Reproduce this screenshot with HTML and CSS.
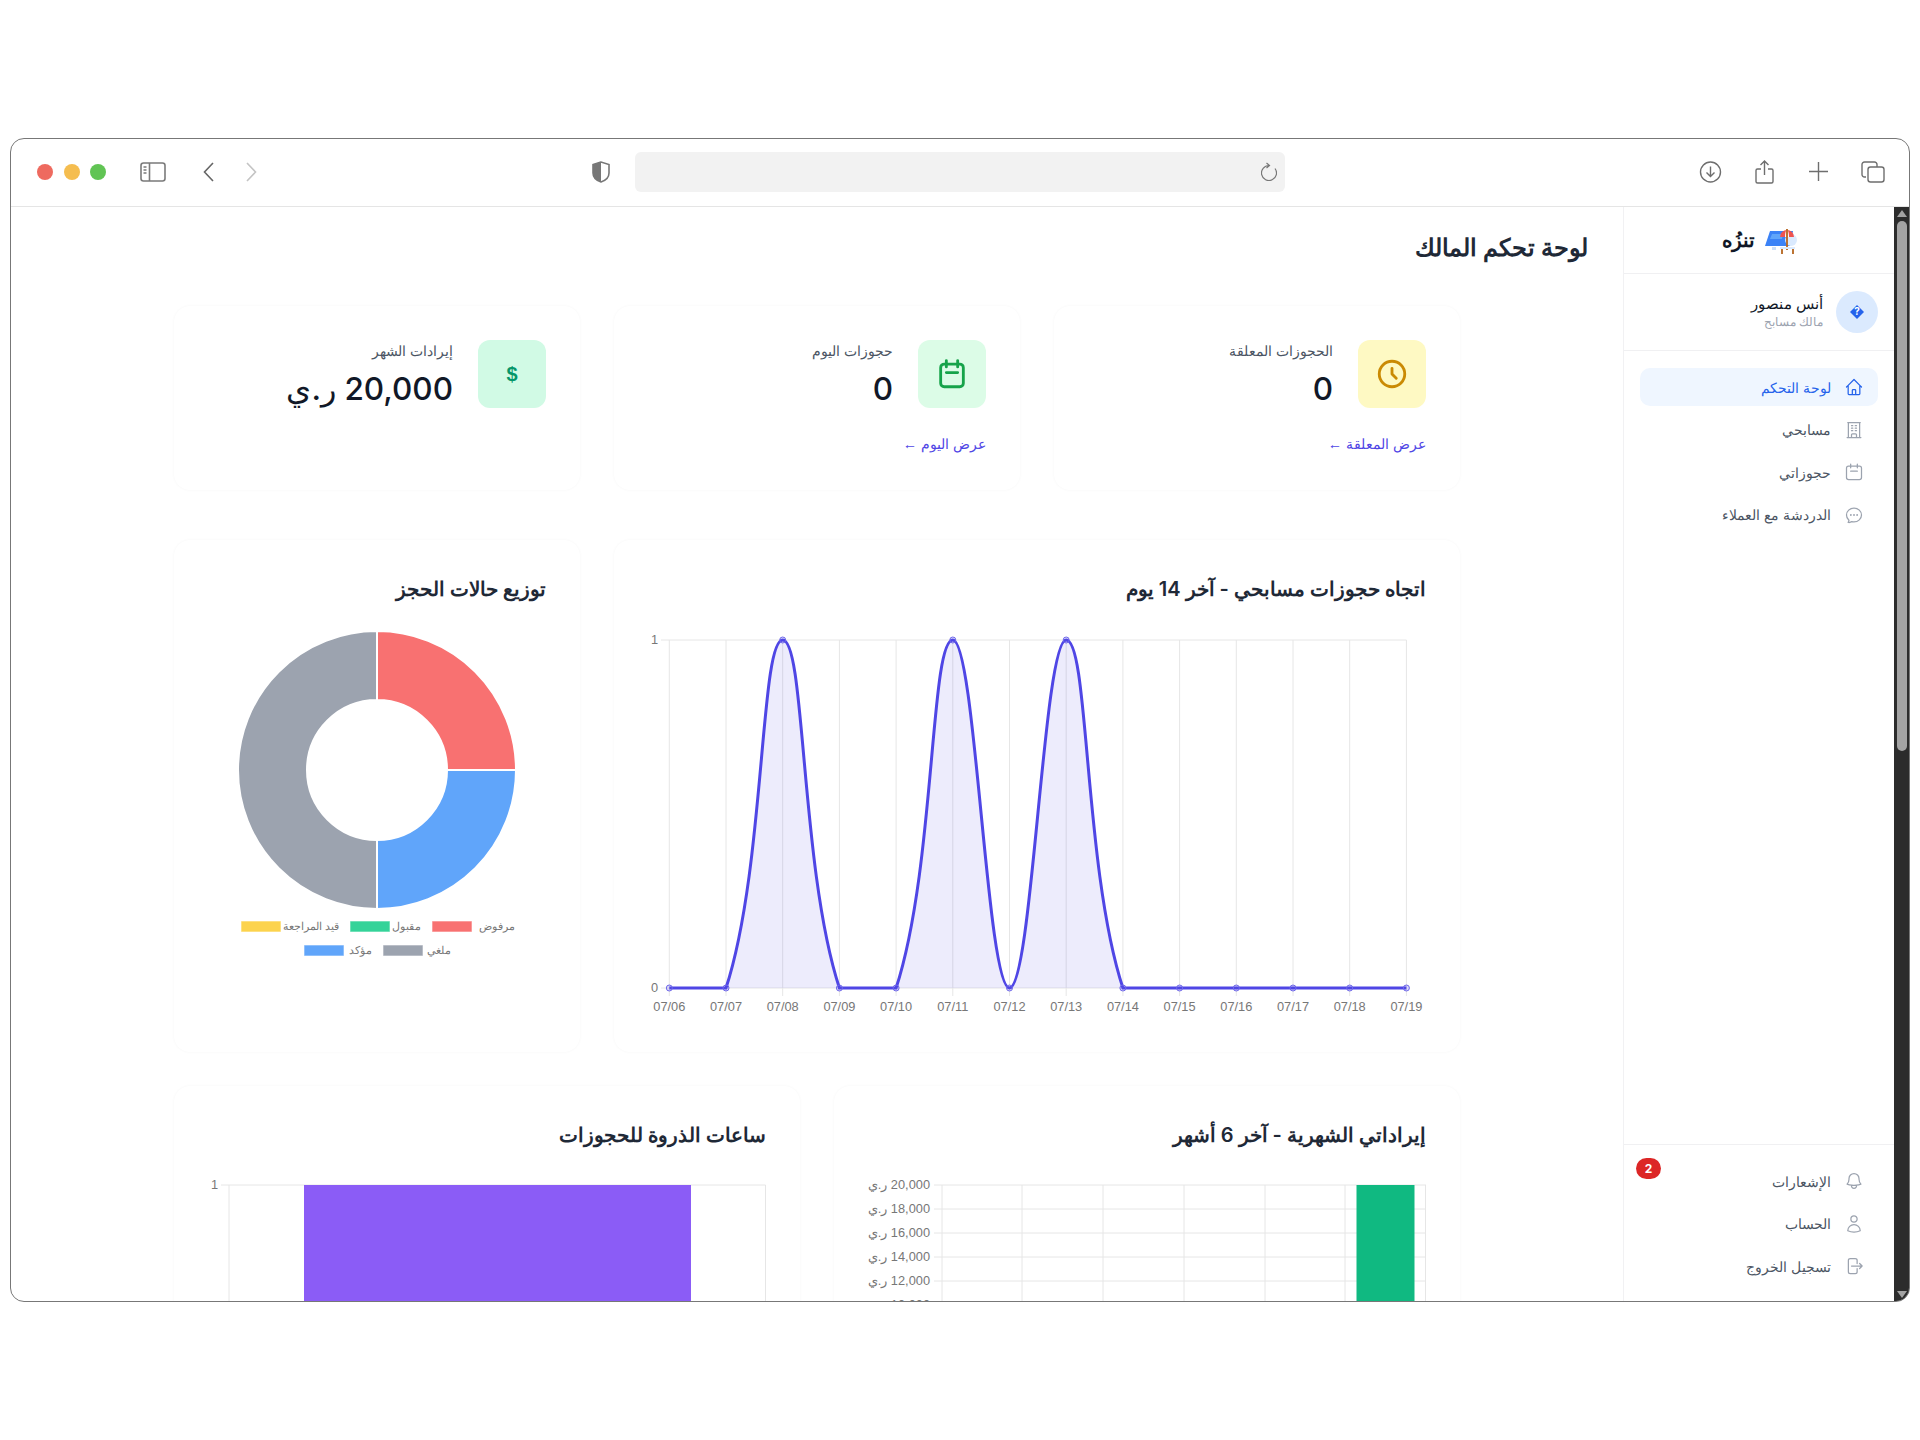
FILE: index.html
```html
<!DOCTYPE html>
<html lang="ar">
<head>
  <meta charset="UTF-8">
  <meta name="viewport" content="width=device-width, initial-scale=1.0">
  <title>لوحة تحكم المالك</title>
  <link rel="stylesheet" href="styles.css">
</head>
<body>
  <div class="window">
    <!-- Browser toolbar -->
    <div class="toolbar">
      <span class="dot dot-red"></span>
      <span class="dot dot-yellow"></span>
      <span class="dot dot-green"></span>
      <svg class="tb-sidebar" viewBox="0 0 26 20" fill="none" stroke="#7a7a7a" stroke-width="1.6"><rect x="1" y="1" width="24" height="18" rx="2.5"/><path d="M9.5 1v18M3.5 5h3M3.5 8h3M3.5 11h3"/></svg>
      <svg class="tb-back" viewBox="0 0 11 20" fill="none" stroke="#666" stroke-width="1.6"><path d="M10 1 1.5 10l8.5 9"/></svg>
      <svg class="tb-forward" viewBox="0 0 11 20" fill="none" stroke="#c4c4c4" stroke-width="1.6"><path d="m1 1 8.5 9L1 19"/></svg>
      <svg class="tb-shield" viewBox="0 0 20 22"><path d="M10 1 2 3.5V12c0 4 3.5 7.5 8 9 4.5-1.5 8-5 8-9V3.5z" fill="none" stroke="#777" stroke-width="1.6"/><path d="M10 1 2 3.5V12c0 4 3.5 7.5 8 9z" fill="#777"/></svg>
      <div class="urlbar">
        <svg class="tb-reload" viewBox="0 0 16 19" fill="none" stroke="#777" stroke-width="1.2"><path d="M8 3.5A7.5 7.5 0 1 0 14 6.5M5.500 1l3 2.500-3 2.500"/></svg>
      </div>
      <svg class="tb-download" viewBox="0 0 23 22" fill="none" stroke="#6e6e6e" stroke-width="1.4"><circle cx="11.5" cy="11" r="10"/><path d="M11.5 5.5v10M7.5 11.5l4 4 4-4"/></svg>
      <svg class="tb-share" viewBox="0 0 19 24" fill="none" stroke="#6e6e6e" stroke-width="1.4"><path d="M6 9H2.500A1.500 1.500 0 0 0 1 10.500v11A1.500 1.500 0 0 0 2.500 23h14a1.500 1.500 0 0 0 1.500-1.500v-11A1.500 1.500 0 0 0 16.500 9H13M9.500 15V1M5.500 5l4-4 4 4"/></svg>
      <svg class="tb-plus" viewBox="0 0 19 19" fill="none" stroke="#6e6e6e" stroke-width="1.4"><path d="M9.5 0v19M0 9.5h19"/></svg>
      <svg class="tb-tabs" viewBox="0 0 24 22" fill="none" stroke="#6e6e6e" stroke-width="1.4"><path d="M5 16H3.500A2.500 2.500 0 0 1 1 13.500v-10A2.500 2.500 0 0 1 3.500 1h10A2.500 2.500 0 0 1 16 3.500V6"/><rect x="7" y="6" width="16" height="15" rx="2.5"/></svg>
    </div>

    <div class="app">
      <!-- Scrollbar -->
      <div class="scrollbar">
        <span class="sb-up"></span>
        <span class="sb-thumb"></span>
        <span class="sb-down"></span>
      </div>

      <!-- Sidebar -->
      <aside class="sidebar">
        <div class="brand">
          <svg class="brand-logo" viewBox="0 0 33 27">
            <path d="M6 4h23l-3 15H1z" fill="#3b82f6"/>
            <path d="M8 7h11l-1 5H6z" fill="#60a5fa"/>
            <circle cx="27" cy="13" r="6" fill="#dbeafe"/>
            <path d="M9 20v3M11 20v3" stroke="#bcd4f6" stroke-width="1.5"/>
            <path d="M16 10a7 7 0 0 1 14 0z" fill="#ef5350"/>
            <path d="M21 10a2 7 0 0 1 4 0z" fill="#fff"/>
            <path d="M23 2v21M18 27v-6M29 27v-6" stroke="#b5651d" stroke-width="1.8"/>
            <path d="M16 21h15" stroke="#dbeafe" stroke-width="2"/>
          </svg>
          <span class="brand-name">تنزُه</span>
        </div>

        <div class="profile">
          <div class="avatar">
            <svg viewBox="0 0 14 14" width="14" height="14"><path d="M7 0 14 7 7 14 0 7z" fill="#2563eb"/><text x="7" y="10" class="avatar-q">?</text></svg>
          </div>
          <div class="profile-text">
            <div class="profile-name">أنس منصور</div>
            <div class="profile-role">مالك مسابح</div>
          </div>
        </div>

        <nav class="nav">
          <a class="nav-item active">
            <svg class="nav-icon" viewBox="0 0 24 24"><path d="M3 12l2-2m0 0l7-7 7 7M5 10v10a1 1 0 001 1h3m10-11l2 2m-2-2v10a1 1 0 01-1 1h-3m-6 0a1 1 0 001-1v-4a1 1 0 011-1h2a1 1 0 011 1v4a1 1 0 001 1m-6 0h6"/></svg>
            لوحة التحكم
          </a>
          <a class="nav-item">
            <svg class="nav-icon" viewBox="0 0 24 24"><path d="M3.75 21h16.5M4.5 3h15M5.25 3v18m13.5-18v18M9 6.75h1.5m-1.5 3h1.5m-1.5 3h1.5m3-6H15m-1.5 3H15m-1.5 3H15M9 21v-3.375c0-.621.504-1.125 1.125-1.125h3.75c.621 0 1.125.504 1.125 1.125V21"/></svg>
            مسابحي
          </a>
          <a class="nav-item">
            <svg class="nav-icon" viewBox="0 0 24 24"><rect x="3" y="5" width="18" height="16" rx="2.5"/><path d="M8 2.5V7M16 2.5V7M8 11h8"/></svg>
            حجوزاتي
          </a>
          <a class="nav-item">
            <svg class="nav-icon" viewBox="0 0 24 24"><path d="M8.625 12a.375.375 0 11-.75 0 .375.375 0 01.75 0zm0 0H8.25m4.125 0a.375.375 0 11-.75 0 .375.375 0 01.75 0zm0 0H12m4.125 0a.375.375 0 11-.75 0 .375.375 0 01.75 0zm0 0h-.375M21 12c0 4.556-4.03 8.25-9 8.25a9.764 9.764 0 01-2.555-.337A5.972 5.972 0 015.41 20.97a5.969 5.969 0 01-.474-.065 4.48 4.48 0 00.978-2.025c.09-.457-.133-.901-.467-1.226C3.93 16.178 3 14.189 3 12c0-4.556 4.03-8.25 9-8.25s9 3.694 9 8.25z"/></svg>
            الدردشة مع العملاء
          </a>
        </nav>

        <div class="nav nav-bottom">
          <a class="nav-item">
            <svg class="nav-icon" viewBox="0 0 24 24"><path d="M14.857 17.082a23.848 23.848 0 005.454-1.31A8.967 8.967 0 0118 9.75V9A6 6 0 006 9v.75a8.967 8.967 0 01-2.312 6.022c1.733.64 3.56 1.085 5.455 1.31m5.714 0a24.255 24.255 0 01-5.714 0m5.714 0a3 3 0 11-5.714 0"/></svg>
            الإشعارات
            <span class="badge">2</span>
          </a>
          <a class="nav-item">
            <svg class="nav-icon" viewBox="0 0 24 24"><path d="M15.75 6a3.75 3.75 0 11-7.5 0 3.75 3.75 0 017.5 0zM4.501 20.118a7.5 7.5 0 0114.998 0A17.933 17.933 0 0112 21.75c-2.676 0-5.216-.584-7.499-1.632z"/></svg>
            الحساب
          </a>
          <a class="nav-item">
            <svg class="nav-icon" viewBox="0 0 24 24"><path d="M15.75 9V5.25A2.25 2.25 0 0013.5 3h-6a2.25 2.25 0 00-2.25 2.25v13.5A2.25 2.25 0 007.5 21h6a2.25 2.25 0 002.25-2.25V15m3 0l3-3m0 0l-3-3m3 3H9"/></svg>
            تسجيل الخروج
          </a>
        </div>
      </aside>

      <!-- Main content -->
      <main class="main">
        <h1 class="page-title">لوحة تحكم المالك</h1>

        <div class="content">
          <div class="stats">
            <div class="card stat-card">
              <div class="stat">
                <div class="tile tile-yellow">
                  <svg viewBox="0 0 24 24" width="34" height="34" fill="none" stroke="#ca8a04" stroke-width="2" stroke-linecap="round" stroke-linejoin="round"><path d="M12 8v4l3 3m6-3a9 9 0 11-18 0 9 9 0 0118 0z"/></svg>
                </div>
                <div>
                  <div class="stat-label">الحجوزات المعلقة</div>
                  <div class="stat-value">0</div>
                </div>
              </div>
              <a class="stat-link">عرض المعلقة <span class="arrow">←</span></a>
            </div>

            <div class="card stat-card">
              <div class="stat">
                <div class="tile tile-green">
                  <svg viewBox="0 0 24 24" width="34" height="34" fill="none" stroke="#16a34a" stroke-width="2" stroke-linecap="round" stroke-linejoin="round"><rect x="4" y="5" width="16" height="16" rx="2.5"/><path d="M8 2.5V7M16 2.5V7M8 11h8"/></svg>
                </div>
                <div>
                  <div class="stat-label">حجوزات اليوم</div>
                  <div class="stat-value">0</div>
                </div>
              </div>
              <a class="stat-link">عرض اليوم <span class="arrow">←</span></a>
            </div>

            <div class="card stat-card">
              <div class="stat">
                <div class="tile tile-mint"><span class="dollar">$</span></div>
                <div>
                  <div class="stat-label">إيرادات الشهر</div>
                  <div class="stat-value">20,000 ر.ي</div>
                </div>
              </div>
            </div>
          </div>

          <div class="charts-wide">
            <div class="card chart-card">
              <h2 class="chart-title">اتجاه حجوزات مسابحي - آخر 14 يوم</h2>
              <svg class="chart" width="777" height="414" viewBox="649 604 777 414">
                <g class="grid">
                  <path d="M661 640H1406.4M661 988H1406.4"/>
                  <path d="M669.3 640V996M726 640V996M782.7 640V996M839.4 640V996M896.1 640V996M952.8 640V996M1009.5 640V996M1066.2 640V996M1122.9 640V996M1179.6 640V996M1236.3 640V996M1293 640V996M1349.7 640V996M1406.4 640V996"/>
                </g>
                <path class="area" d="M669.3 988L726 988C765.1 868.1 760 640 782.7 640C805.4 640 800.3 868.1 839.4 988L896.1 988C935.2 868.1 930.1 640 952.8 640C975.5 640 986.8 988 1009.5 988C1032.2 988 1043.5 640 1066.2 640C1088.9 640 1083.8 868.1 1122.9 988L1406.4 988Z"/>
                <path class="line" d="M669.3 988L726 988C765.1 868.1 760 640 782.7 640C805.4 640 800.3 868.1 839.4 988L896.1 988C935.2 868.1 930.1 640 952.8 640C975.5 640 986.8 988 1009.5 988C1032.2 988 1043.5 640 1066.2 640C1088.9 640 1083.8 868.1 1122.9 988L1406.4 988"/>
                <g class="points">
                  <circle cx="669.3" cy="988" r="3"/><circle cx="726" cy="988" r="3"/><circle cx="782.7" cy="640" r="3"/><circle cx="839.4" cy="988" r="3"/><circle cx="896.1" cy="988" r="3"/><circle cx="952.8" cy="640" r="3"/><circle cx="1009.5" cy="988" r="3"/><circle cx="1066.2" cy="640" r="3"/><circle cx="1122.9" cy="988" r="3"/><circle cx="1179.6" cy="988" r="3"/><circle cx="1236.3" cy="988" r="3"/><circle cx="1293" cy="988" r="3"/><circle cx="1349.7" cy="988" r="3"/><circle cx="1406.4" cy="988" r="3"/>
                </g>
                <g class="tick tick-y">
                  <text x="658" y="644">1</text>
                  <text x="658" y="992">0</text>
                </g>
                <g class="tick tick-x">
                  <text x="669.3" y="1011">07/06</text><text x="726" y="1011">07/07</text><text x="782.7" y="1011">07/08</text><text x="839.4" y="1011">07/09</text><text x="896.1" y="1011">07/10</text><text x="952.8" y="1011">07/11</text><text x="1009.5" y="1011">07/12</text><text x="1066.2" y="1011">07/13</text><text x="1122.9" y="1011">07/14</text><text x="1179.6" y="1011">07/15</text><text x="1236.3" y="1011">07/16</text><text x="1293" y="1011">07/17</text><text x="1349.7" y="1011">07/18</text><text x="1406.4" y="1011">07/19</text>
                </g>
              </svg>
            </div>

            <div class="card chart-card">
              <h2 class="chart-title">توزيع حالات الحجز</h2>
              <svg class="chart" width="338" height="414" viewBox="208 604 338 414">
                <g class="donut">
                  <path fill="#f87171" d="M377 631A139 139 0 0 1 516 770H447A70 70 0 0 0 377 700Z"/>
                  <path fill="#60a5fa" d="M516 770A139 139 0 0 1 377 909V840A70 70 0 0 0 447 770Z"/>
                  <path fill="#9ca3af" d="M377 909A139 139 0 0 1 377 631V700A70 70 0 0 0 377 840Z"/>
                </g>
                <g class="legend">
                  <rect x="241" y="921" width="40" height="11" fill="#fcd34d"/>
                  <text x="339" y="930">قيد المراجعة</text>
                  <rect x="350" y="921" width="40" height="11" fill="#34d399"/>
                  <text x="421" y="930">مقبول</text>
                  <rect x="432" y="921" width="40" height="11" fill="#f87171"/>
                  <text x="515" y="930">مرفوض</text>
                  <rect x="304" y="945" width="40" height="11" fill="#60a5fa"/>
                  <text x="372" y="954">مؤكد</text>
                  <rect x="383" y="945" width="40" height="11" fill="#9ca3af"/>
                  <text x="451" y="954">ملغي</text>
                </g>
              </svg>
            </div>
          </div>

          <div class="charts-half">
            <div class="card chart-card">
              <h2 class="chart-title">إيراداتي الشهرية - آخر 6 أشهر</h2>
              <svg class="chart" width="558" height="170" viewBox="868 1150 558 170">
                <g class="grid">
                  <path d="M934 1185H1426M934 1209H1426M934 1233H1426M934 1257H1426M934 1281H1426M934 1305H1426"/>
                  <path d="M942 1185V1320M1022 1185V1320M1103 1185V1320M1184 1185V1320M1265 1185V1320M1345 1185V1320M1425.5 1185V1320"/>
                </g>
                <rect x="1356.5" y="1185" width="58" height="135" fill="#10b981"/>
                <g class="tick tick-money">
                  <text x="930" y="1189">20,000 ر.ي</text>
                  <text x="930" y="1213">18,000 ر.ي</text>
                  <text x="930" y="1237">16,000 ر.ي</text>
                  <text x="930" y="1261">14,000 ر.ي</text>
                  <text x="930" y="1285">12,000 ر.ي</text>
                  <text x="930" y="1309">10,000 ر.ي</text>
                </g>
              </svg>
            </div>

            <div class="card chart-card">
              <h2 class="chart-title">ساعات الذروة للحجوزات</h2>
              <svg class="chart" width="558" height="170" viewBox="208 1150 558 170">
                <g class="grid">
                  <path d="M221 1185H765.5"/>
                  <path d="M229 1185V1320M765.5 1185V1320"/>
                </g>
                <rect x="304" y="1185" width="387" height="135" fill="#8b5cf6"/>
                <g class="tick tick-y">
                  <text x="218" y="1189">1</text>
                </g>
              </svg>
            </div>
          </div>
        </div>
      </main>
    </div>
  </div>
</body>
</html>
```

FILE: styles.css
```css
* {
  box-sizing: border-box;
}
body {
  margin: 0;
  padding: 138px 0 0 10px;
  background-color: #fff;
  font-family: Inter, "Noto Sans", sans-serif;
  color: #111827;
}

/* browser frame */
.window {
  width: 1900px;
  height: 1164px;
  border: 1px solid #777;
  border-radius: 14px;
  overflow: hidden;
  background-color: #fff;
  display: flex;
  flex-direction: column;
}
.toolbar {
  height: 68px;
  flex-shrink: 0;
  display: flex;
  align-items: center;
  padding-left: 26px;
  padding-bottom: 2px;
  border-bottom: 1px solid #e5e5e5;
}
.dot {
  width: 16px;
  height: 16px;
  border-radius: 50%;
  margin-right: 10.5px;
}
.dot-red { background-color: #ee6a5f; }
.dot-yellow { background-color: #f5bd4f; }
.dot-green { background-color: #61c454; }
.tb-sidebar { width: 26px; height: 20px; margin-left: 23px; }
.tb-back { width: 11px; height: 20px; margin-left: 37px; }
.tb-forward { width: 11px; height: 20px; margin-left: 32px; }
.tb-shield { width: 20px; height: 22px; margin-left: 334px; }
.urlbar {
  width: 650px;
  height: 40px;
  margin-left: 24px;
  background-color: #f2f2f2;
  border-radius: 6px;
  display: flex;
  align-items: center;
  justify-content: flex-end;
  padding-right: 8px;
}
.tb-reload { width: 16px; height: 19px; }
.tb-download { width: 23px; height: 22px; margin-left: 414px; }
.tb-share { width: 19px; height: 24px; margin-left: 33px; }
.tb-plus { width: 19px; height: 19px; margin-left: 35px; }
.tb-tabs { width: 24px; height: 22px; margin-left: 33px; }

.app {
  flex: 1;
  min-height: 0;
  display: flex;
  direction: rtl;
}

/* scrollbar */
.scrollbar {
  width: 15px;
  flex-shrink: 0;
  background-color: #2c2c2c;
  display: flex;
  flex-direction: column;
  align-items: center;
}
.sb-up {
  margin-top: 3px;
  border-left: 5px solid transparent;
  border-right: 5px solid transparent;
  border-bottom: 7px solid #a3a3a3;
}
.sb-thumb {
  width: 10px;
  height: 530px;
  margin-top: 4px;
  border-radius: 5px;
  background-color: #a3a3a3;
}
.sb-down {
  margin-top: auto;
  margin-bottom: 3px;
  border-left: 5px solid transparent;
  border-right: 5px solid transparent;
  border-top: 7px solid #a3a3a3;
}

/* sidebar */
.sidebar {
  width: 271px;
  flex-shrink: 0;
  display: flex;
  flex-direction: column;
  border-left: 1px solid #f1f1f3;
}
.brand {
  height: 67px;
  flex-shrink: 0;
  display: flex;
  align-items: center;
  justify-content: center;
  gap: 9px;
  border-bottom: 1px solid #f0f0f2;
}
.brand-logo {
  width: 33px;
  height: 27px;
}
.brand-name {
  font-size: 20px;
  font-weight: 600;
}
.profile {
  height: 77px;
  flex-shrink: 0;
  display: flex;
  align-items: center;
  gap: 13px;
  padding-right: 16px;
  border-bottom: 1px solid #f0f0f2;
}
.avatar {
  width: 42px;
  height: 42px;
  border-radius: 50%;
  background-color: #dbeafe;
  display: flex;
  align-items: center;
  justify-content: center;
}
.avatar-q {
  fill: #fff;
  font-size: 10px;
  font-weight: 700;
  text-anchor: middle;
}
.profile-name {
  font-size: 14.6px;
  font-weight: 500;
  line-height: 20px;
}
.profile-role {
  font-size: 12.3px;
  line-height: 16px;
  color: #9ca3af;
}
.nav {
  display: flex;
  flex-direction: column;
  gap: 4.5px;
  padding: 17px 16px 16px;
}
.nav-bottom {
  margin-top: auto;
  border-top: 1px solid #f0f0f2;
}
.nav-item {
  height: 38px;
  position: relative;
  display: flex;
  align-items: center;
  gap: 13px;
  padding-right: 14px;
  border-radius: 10px;
  font-size: 14.2px;
  font-weight: 500;
  color: #4b5563;
}
.nav-item.active {
  background-color: #eff6ff;
  color: #2563eb;
}
.nav-icon {
  width: 20px;
  height: 20px;
  flex-shrink: 0;
  fill: none;
  stroke: #9ca3af;
  stroke-width: 1.5;
  stroke-linecap: round;
  stroke-linejoin: round;
}
.nav-item.active .nav-icon {
  stroke: #2563eb;
}
.badge {
  position: absolute;
  left: -4px;
  top: -4px;
  width: 25px;
  height: 21px;
  border-radius: 11px;
  background-color: #dc2626;
  color: #fff;
  font-size: 12px;
  font-weight: 700;
  display: flex;
  align-items: center;
  justify-content: center;
}

/* main */
.main {
  flex: 1;
  min-width: 0;
  padding: 22px 35px 0 0;
  overflow: hidden;
}
.page-title {
  margin: 0 0 41px;
  font-size: 24.4px;
  line-height: 36px;
  font-weight: 600;
  color: #1f2937;
}
.content {
  width: 1286px;
  margin-right: 128px;
}
.card {
  background-color: #fff;
  border-radius: 16px;
  box-shadow: 0 0 3px rgba(0, 0, 0, 0.04);
  padding: 34px;
}
.stats {
  display: grid;
  grid-template-columns: repeat(3, 406px);
  gap: 34px;
}
.stat-card {
  height: 184px;
}
.stat {
  display: flex;
  gap: 25px;
}
.tile {
  width: 68px;
  height: 68px;
  border-radius: 12px;
  display: flex;
  align-items: center;
  justify-content: center;
}
.tile-yellow { background-color: #fef9c3; }
.tile-green { background-color: #dcfce7; }
.tile-mint { background-color: #d1fae5; }
.dollar {
  font-family: "Liberation Sans", sans-serif;
  font-size: 20px;
  font-weight: 700;
  color: #059669;
}
.stat-label {
  font-size: 14px;
  line-height: 22px;
  color: #4b5563;
}
.stat-value {
  margin-top: 7px;
  font-size: 31.5px;
  line-height: 40px;
  font-weight: 500;
  color: #111827;
}
.stat-link {
  display: block;
  margin-top: 24px;
  font-size: 14.3px;
  line-height: 21px;
  color: #4f46e5;
}
.arrow {
  font-family: "Liberation Sans", sans-serif;
}
.charts-wide {
  display: grid;
  grid-template-columns: 846px 406px;
  gap: 34px;
  margin-top: 50px;
}
.charts-wide .chart-card {
  height: 512px;
}
.charts-half {
  display: grid;
  grid-template-columns: repeat(2, 626px);
  gap: 34px;
  margin-top: 34px;
}
.chart-title {
  margin: 0;
  font-size: 20px;
  line-height: 30px;
  font-weight: 600;
  color: #1f2937;
}
.chart {
  display: block;
  direction: ltr;
  overflow: hidden;
}

/* chart drawing */
.grid path {
  fill: none;
  stroke: #e6e6e6;
  stroke-width: 1;
}
.area {
  fill: rgba(79, 70, 229, 0.1);
}
.line {
  fill: none;
  stroke: #4f46e5;
  stroke-width: 3;
}
.points circle {
  fill: rgba(79, 70, 229, 0.2);
  stroke: #6f68ea;
  stroke-width: 1;
}
.tick text,
.legend text {
  font-family: "Liberation Sans", sans-serif;
  fill: #777;
}
.tick text {
  font-size: 12.8px;
}
.tick-x text {
  text-anchor: middle;
}
.tick-y text {
  text-anchor: end;
}
.tick-money text {
  direction: rtl;
  text-anchor: start;
}
.legend text {
  font-size: 10.5px;
  text-anchor: end;
}
.legend rect {
  stroke: rgba(255, 255, 255, 0.6);
}
.donut path {
  stroke: #fff;
  stroke-width: 2;
}
```
